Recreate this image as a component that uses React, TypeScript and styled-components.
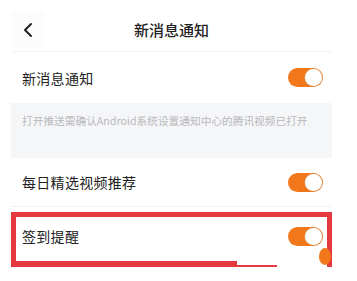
import React from "react";
import styled, { createGlobalStyle } from "styled-components";

const Global = createGlobalStyle`
  html, body { margin: 0; padding: 0; background: #fff; }
  body { font-family: "Noto Sans CJK SC", "Noto Sans", sans-serif; color: #222; }
`;

const Screen = styled.div`
  width: 357px;
  height: 281px;
  overflow: hidden;
  padding: 0 25px 0 11px;
  box-sizing: border-box;
  position: relative;
`;

const Header = styled.div`
  height: 52px;
  display: flex;
  align-items: center;
  position: relative;
  border-bottom: 1px solid #f2f3f5;
  padding-top: 8px;
  box-sizing: border-box;
`;

const Back = styled.div`
  width: 34px;
  height: 36px;
  display: flex;
  align-items: center;
  justify-content: center;
  background: #fcfcfc;
`;

const Title = styled.div`
  position: absolute;
  left: 0;
  right: 0;
  top: 8px;
  bottom: 0;
  display: flex;
  align-items: center;
  justify-content: center;
  font-size: 15px;
  font-weight: 500;
  color: #222;
  pointer-events: none;
`;

const Row = styled.div<{ $h: number }>`
  height: ${(p) => p.$h}px;
  display: flex;
  align-items: center;
  justify-content: space-between;
  padding: 0 9px 0 11px;
  box-sizing: border-box;
  position: relative;
`;

const Label = styled.div`
  font-size: 14px;
  color: #222;
  letter-spacing: 0.3px;
`;

const Track = styled.div`
  width: 35px;
  height: 19px;
  border-radius: 10px;
  background: #f2771a;
  position: relative;
`;

const Knob = styled.div`
  position: absolute;
  right: 1px;
  top: 1px;
  width: 17px;
  height: 17px;
  border-radius: 50%;
  background: #fff;
  box-shadow: 0 0 0 0.6px #d9a06a;
`;

const Note = styled.div`
  background: #f5f6f8;
  height: 55px;
  padding: 10px 11px 0;
  box-sizing: border-box;
  font-size: 10.7px;
  color: #b8b8bc;
  white-space: nowrap;
`;

const Divider = styled.div`
  height: 1px;
  background: #eef3f5;
`;

const Highlight = styled.div`
  position: absolute;
  left: 11px;
  top: 212px;
  width: 321px;
  height: 55px;
  border: 5px solid #e5383f;
  border-bottom: none;
  box-sizing: border-box;
  pointer-events: none;
`;

const BottomBar = styled.div`
  position: absolute;
  left: 11px;
  top: 261px;
  width: 226px;
  height: 6px;
  background: #e5383f;
`;

const ThinBar = styled.div`
  position: absolute;
  left: 237px;
  top: 265px;
  width: 40px;
  height: 2px;
  background: #e5383f;
`;

const Blob = styled.div`
  position: absolute;
  left: 319px;
  top: 248px;
  width: 12px;
  height: 17px;
  border-radius: 50%;
  background: #f2771a;
`;

const Toggle = () => (
  <Track>
    <Knob />
  </Track>
);

export default function App() {
  return (
    <>
      <Global />
      <Screen>
        <Header>
          <Back>
            <svg width="14" height="16" viewBox="0 0 14 16">
              <path d="M10 2 L4 8 L10 14" fill="none" stroke="#222" strokeWidth="2" strokeLinecap="round" strokeLinejoin="round" />
            </svg>
          </Back>
          <Title>新消息通知</Title>
        </Header>
        <Row $h={51}>
          <Label>新消息通知</Label>
          <Toggle />
        </Row>
        <Note>打开推送需确认Android系统设置通知中心的腾讯视频已打开</Note>
        <Row $h={48}>
          <Label>每日精选视频推荐</Label>
          <Toggle />
        </Row>
        <Divider />
        <Row $h={58}>
          <Label>签到提醒</Label>
          <Toggle />
        </Row>
        <Highlight />
        <BottomBar />
        <ThinBar />
        <Blob />
      </Screen>
    </>
  );
}
